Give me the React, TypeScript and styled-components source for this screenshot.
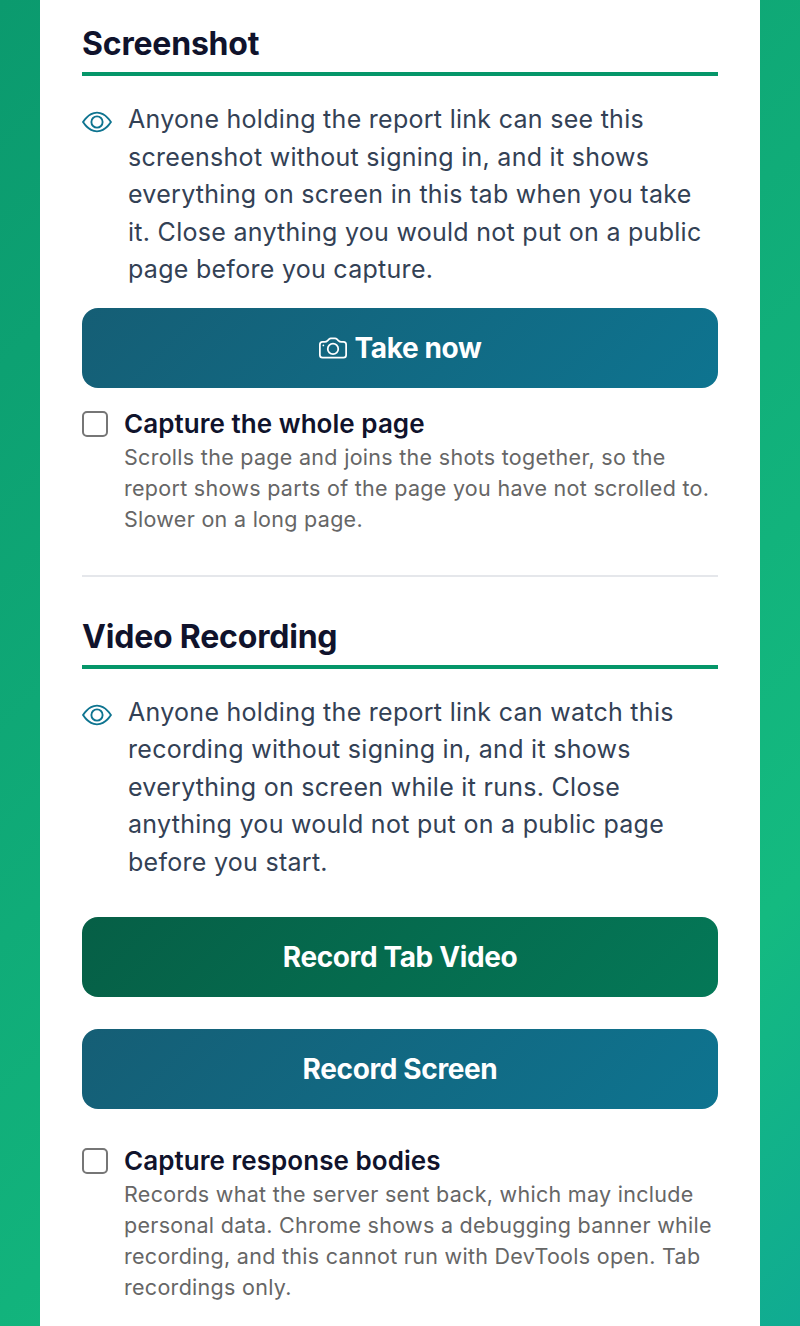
import React from "react";
import styled, { createGlobalStyle } from "styled-components";
import { BsEye, BsCamera } from "react-icons/bs";

const Global = createGlobalStyle`
  html, body { margin: 0; padding: 0; }
  body {
    height: 1326px;
    overflow: hidden;
    background: linear-gradient(135deg, #0b9a6e 0%, #14ba80 79%, #10ab92 100%);
    font-family: Inter, "Liberation Sans", sans-serif;
  }
`;

const Card = styled.main`
  box-sizing: border-box;
  width: 720px;
  height: 1326px;
  margin: 0 auto;
  padding: 22px 42px 0;
  background: #fff;
`;

const Section = styled.section`
  display: flex;
  flex-direction: column;
`;

const Heading = styled.h2`
  margin: 0;
  padding-bottom: 6px;
  border-bottom: 4px solid #059669;
  font-size: 32px;
  line-height: 44px;
  font-weight: 700;
  letter-spacing: -0.2px;
  color: #10132c;
`;

const Notice = styled.div`
  display: flex;
  gap: 16px;
  margin-top: 25px;
`;

const EyeIcon = styled(BsEye)`
  flex: none;
  width: 30px;
  height: 30px;
  margin-top: 6px;
  color: #0e7490;
`;

const NoticeText = styled.p`
  margin: 0;
  font-size: 25px;
  line-height: 37.5px;
  letter-spacing: 0.28px;
  color: #334155;
`;

const ActionButton = styled.button<{ $tone: "blue" | "green" }>`
  display: flex;
  align-items: center;
  justify-content: center;
  gap: 8px;
  width: 100%;
  height: 80px;
  border: 0;
  border-radius: 16px;
  padding: 0;
  background: ${(p) =>
    p.$tone === "blue"
      ? "linear-gradient(135deg, #155e75, #0e7490)"
      : "linear-gradient(135deg, #065f46, #047857)"};
  color: #fff;
  font-family: inherit;
  font-size: 28px;
  font-weight: 700;
  letter-spacing: -0.375px;
`;

const CameraIcon = styled(BsCamera)`
  width: 28px;
  height: 28px;
`;

const ButtonStack = styled.div<{ $top: number }>`
  display: flex;
  flex-direction: column;
  gap: 32px;
  margin-top: ${(p) => p.$top}px;
`;

const CheckRow = styled.label<{ $top: number }>`
  display: flex;
  gap: 16px;
  margin-top: ${(p) => p.$top}px;
`;

const CheckBox = styled.span`
  flex: none;
  box-sizing: border-box;
  width: 26px;
  height: 26px;
  margin-top: 4px;
  border: 2px solid #767676;
  border-radius: 5px;
  background: #fff;
`;

const CheckText = styled.div`
  display: flex;
  flex-direction: column;
`;

const CheckTitle = styled.span`
  font-size: 26px;
  line-height: 34px;
  font-weight: 600;
  letter-spacing: 0.05px;
  color: #10132c;
`;

const CheckHint = styled.span`
  margin-top: 1px;
  font-size: 21.5px;
  line-height: 31px;
  letter-spacing: 0.29px;
  color: #666;
`;

const Divider = styled.hr`
  width: 100%;
  margin: 40px 0 38px;
  border: 0;
  border-top: 2px solid #e5e7eb;
`;

export default function App() {
  return (
    <>
      <Global />
      <Card>
        <Section>
          <Heading>Screenshot</Heading>
          <Notice>
            <EyeIcon />
            <NoticeText>
              Anyone holding the report link can see this screenshot without signing in, and it shows everything on screen in this tab when you take it. Close anything you would not put on a public page before you capture.
            </NoticeText>
          </Notice>
          <ButtonStack $top={19}>
            <ActionButton $tone="blue"><CameraIcon />Take now</ActionButton>
          </ButtonStack>
          <CheckRow $top={19}>
            <CheckBox />
            <CheckText>
              <CheckTitle>Capture the whole page</CheckTitle>
              <CheckHint>Scrolls the page and joins the shots together, so the report shows parts of the page you have not scrolled to. Slower on a long page.</CheckHint>
            </CheckText>
          </CheckRow>
        </Section>
        <Divider />
        <Section>
          <Heading>Video Recording</Heading>
          <Notice>
            <EyeIcon />
            <NoticeText>
              Anyone holding the report link can watch this recording without signing in, and it shows everything on screen while it runs. Close anything you would not put on a public page before you start.
            </NoticeText>
          </Notice>
          <ButtonStack $top={36}>
            <ActionButton $tone="green">Record Tab Video</ActionButton>
            <ActionButton $tone="blue">Record Screen</ActionButton>
          </ButtonStack>
          <CheckRow $top={35}>
            <CheckBox />
            <CheckText>
              <CheckTitle>Capture response bodies</CheckTitle>
              <CheckHint>Records what the server sent back, which may include personal data. Chrome shows a debugging banner while recording, and this cannot run with DevTools open. Tab recordings only.</CheckHint>
            </CheckText>
          </CheckRow>
        </Section>
      </Card>
    </>
  );
}
